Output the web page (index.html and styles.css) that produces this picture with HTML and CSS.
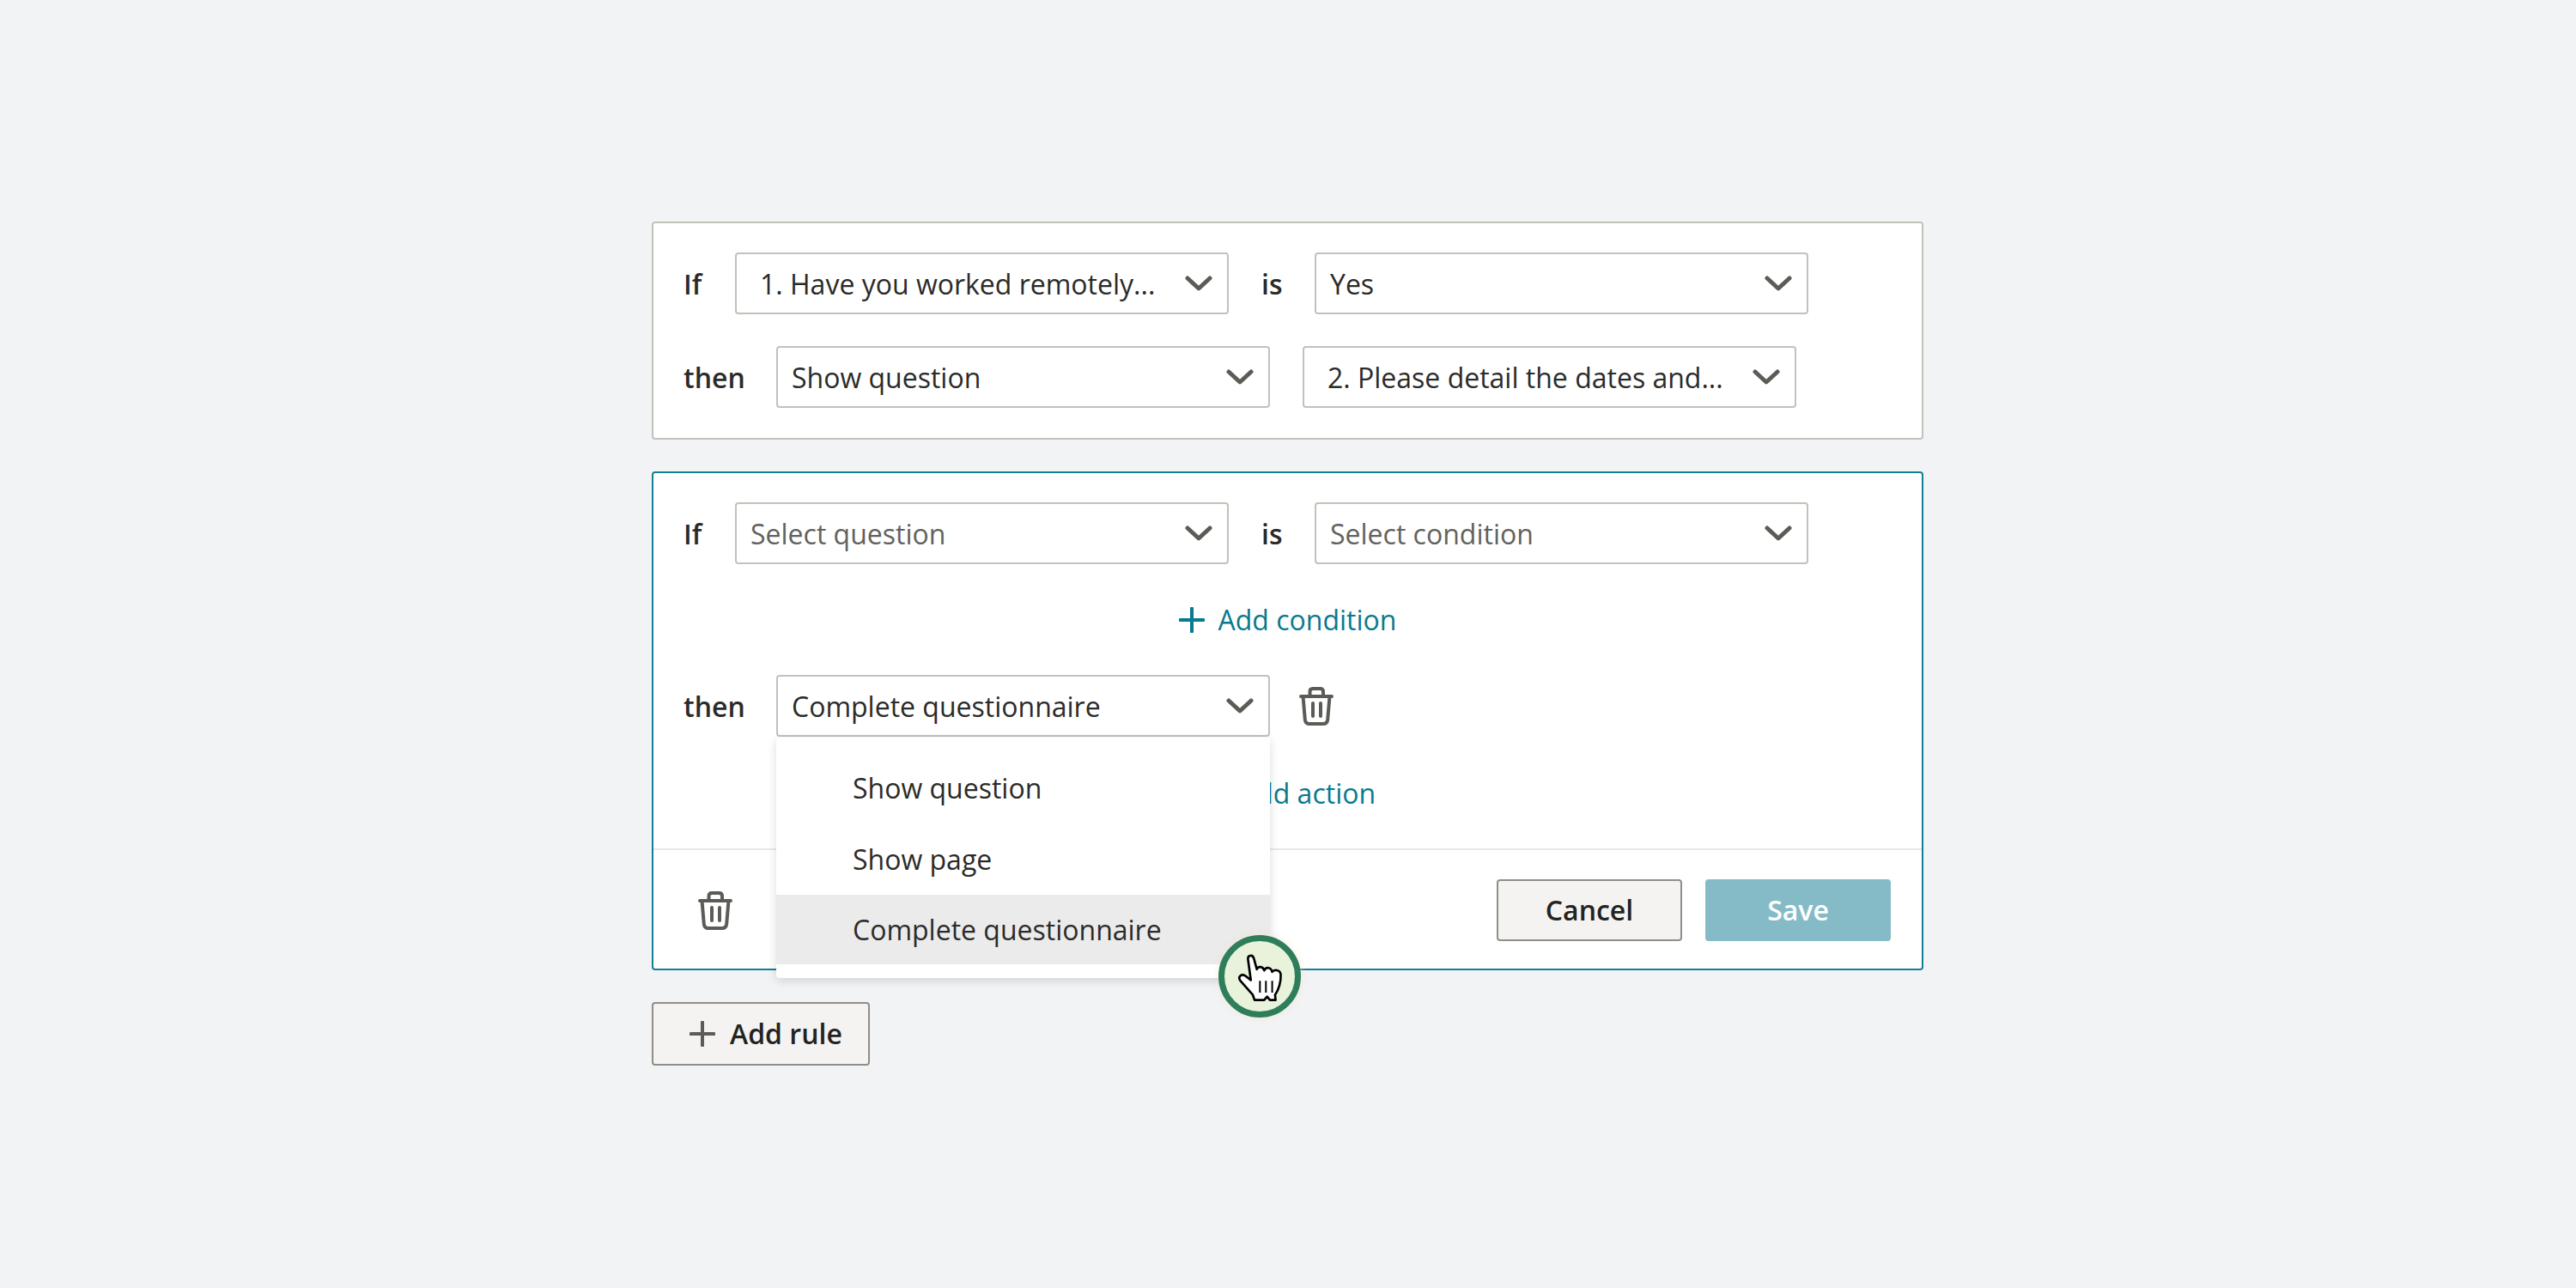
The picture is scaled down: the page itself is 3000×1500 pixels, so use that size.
FILE: index.html
```html
<!DOCTYPE html>
<html lang="en">
<head>
<meta charset="utf-8">
<title>Rules</title>
<link rel="stylesheet" href="styles.css">
</head>
<body>
<svg class="defs" width="0" height="0" aria-hidden="true">
  <symbol id="chev" viewBox="0 0 32 18"><path d="M3 3l13 12L29 3" fill="none" stroke="currentColor" stroke-width="5" stroke-linecap="round" stroke-linejoin="round"/></symbol>
  <symbol id="plus" viewBox="0 0 30 30"><path d="M15 1.5v27M1.5 15h27" fill="none" stroke="currentColor" stroke-width="4" stroke-linecap="round"/></symbol>
  <symbol id="trash" viewBox="0 0 40 45"><path d="M2 11h36M12.5 11V5.5q0-3.500 3.500-3.500h8.500q3.500 0 3.500 3.500V11M4.500 11l2.300 27q.4 5 5.200 5h16q4.800 0 5.200-5l2.300-27M16 19v15M25 19v15" fill="none" stroke="currentColor" stroke-width="4" stroke-linecap="round" stroke-linejoin="round"/></symbol>
</svg>
<main class="page">
  <section class="card">
    <div class="row">
      <span class="label label-if">If</span>
      <div class="select"><span class="indent">1. Have you worked remotely...</span><svg class="chev"><use href="#chev"/></svg></div>
      <span class="label label-is">is</span>
      <div class="select"><span>Yes</span><svg class="chev"><use href="#chev"/></svg></div>
    </div>
    <div class="row">
      <span class="label label-then">then</span>
      <div class="select"><span>Show question</span><svg class="chev"><use href="#chev"/></svg></div>
      <div class="select"><span class="indent">2. Please detail the dates and...</span><svg class="chev"><use href="#chev"/></svg></div>
    </div>
  </section>

  <section class="card card-active">
    <div class="body">
      <div class="row">
        <span class="label label-if">If</span>
        <div class="select"><span class="placeholder">Select question</span><svg class="chev"><use href="#chev"/></svg></div>
        <span class="label label-is">is</span>
        <div class="select"><span class="placeholder">Select condition</span><svg class="chev"><use href="#chev"/></svg></div>
      </div>
      <div class="add-row"><svg class="plus"><use href="#plus"/></svg><span>Add condition</span></div>
      <div class="row row-action">
        <span class="label label-then">then</span>
        <div class="select-wrap">
          <div class="select"><span>Complete questionnaire</span><svg class="chev"><use href="#chev"/></svg></div>
          <ul class="menu">
            <li class="menu-item">Show question</li>
            <li class="menu-item">Show page</li>
            <li class="menu-item menu-item-on">Complete questionnaire</li>
          </ul>
        </div>
        <svg class="trash"><use href="#trash"/></svg>
      </div>
      <div class="add-row add-row-last"><svg class="plus"><use href="#plus"/></svg><span>Add action</span></div>
    </div>
    <footer class="footer">
      <svg class="trash"><use href="#trash"/></svg>
      <div class="actions">
        <button class="btn btn-cancel">Cancel</button>
        <button class="btn btn-save">Save</button>
      </div>
    </footer>
  </section>

  <button class="btn btn-add"><svg class="plus plus-dark"><use href="#plus"/></svg>Add rule</button>

  <div class="cursor">
    <svg class="hand" viewBox="115 115 165 175">
      <path d="M155 137C153 122 172 118 176 135L186 172C190 160 208 160 212 176C218 162 236 164 240 181C246 172 268 172 270 190C272 215 262 245 250 262L252 280H232L222 268L212 280H178L172 262L128 212C118 198 132 186 146 195L165 210Z" fill="#fff" stroke="#000" stroke-width="8" stroke-linejoin="round"/>
      <path d="M197 212v42M218 212v42M240 212v42" stroke="#000" stroke-width="6" fill="none"/>
    </svg>
  </div>
</main>
</body>
</html>
```
FILE: styles.css
```css
* { box-sizing: border-box; }
html, body { margin: 0; padding: 0; }
body {
  background: #f2f3f5;
  font-family: "Open Sans", "Noto Sans", sans-serif;
  font-size: 32px;
  color: #2b2b29;
}
.defs { position: absolute; }
.page {
  position: relative;
  width: 1481px;
  margin-left: 759px;
  padding-top: 258px;
  height: 1500px;
}
.card {
  background: #fff;
  border: 2px solid #c2c2bb;
  border-radius: 4px;
  padding: 34px 35px 35px;
  margin-bottom: 37px;
  display: flex;
  flex-direction: column;
  gap: 37px;
}
.card-active {
  border-color: #137f97;
  padding: 0;
  gap: 0;
}
.body { padding: 34px 35px 0; }
.row {
  display: flex;
  align-items: center;
  gap: 38px;
  height: 72px;
}
.label { font-weight: 600; color: #2b2b29; }
.label-if { width: 22px; }
.label-is { width: 24px; }
.label-then { width: 70px; }
.select-wrap { position: relative; }
.select {
  display: flex;
  align-items: center;
  justify-content: space-between;
  width: 575px;
  height: 72px;
  padding: 0 17px 0 16px;
  border: 2px solid #c2c2bb;
  border-radius: 4px;
  background: #fff;
  line-height: 72px;
}
.select span { padding-top: 2px; }
.select .indent { padding-left: 11px; }
.placeholder { color: #62625d; }
.chev { width: 32px; height: 18px; color: #5c5c57; flex: none; }
.add-row {
  display: flex;
  align-items: center;
  justify-content: center;
  gap: 16px;
  height: 129px;
  color: #087a90;
}
.add-row-last { height: 130px; }
.plus { width: 30px; height: 30px; flex: none; }
.plus-dark { color: #5c5c57; }
.trash { width: 40px; height: 45px; color: #5c5c57; flex: none; }
.row-action { gap: 38px; }
.row-action .trash { margin-left: -4px; }
.menu {
  position: absolute;
  left: 0;
  top: 73px;
  width: 575px;
  height: 280px;
  margin: 0;
  padding: 17px 0 0;
  list-style: none;
  background: #fff;
  border-radius: 4px;
  box-shadow: 0 3px 12px rgba(0, 0, 0, .14);
  z-index: 2;
}
.menu-item {
  height: 83px;
  line-height: 83px;
  padding-left: 89px;
}
.menu-item-on { background: #ebebeb; height: 81px; line-height: 81px; }
.footer {
  display: flex;
  align-items: center;
  justify-content: space-between;
  border-top: 2px solid #e8e8e4;
  padding: 34px 36px 32px 52px;
}
.actions { display: flex; gap: 27px; }
.btn {
  font-family: inherit;
  font-size: 32px;
  font-weight: 600;
  height: 72px;
  width: 216px;
  border-radius: 4px;
  padding: 0;
  line-height: 1;
}
.btn-cancel { background: #f4f3f2; border: 2px solid #8f8e88; color: #232321; }
.btn-save { background: #85bbc7; border: 0; color: #fff; }
.btn-add {
  display: flex;
  align-items: center;
  gap: 17px;
  width: 254px;
  height: 74px;
  padding-left: 42px;
  background: #f4f3f2;
  border: 2px solid #8f8e88;
  color: #232321;
}
.cursor {
  position: absolute;
  left: 660px;
  top: 1089px;
  width: 96px;
  height: 96px;
  border-radius: 50%;
  background: #e9f3dc;
  border: 7px solid #2e7d5b;
  box-shadow: 0 0 8px rgba(240, 225, 200, .6);
  z-index: 3;
}
.hand {
  position: absolute;
  left: 14px;
  top: 14px;
  width: 55px;
  height: 58px;
}
```
